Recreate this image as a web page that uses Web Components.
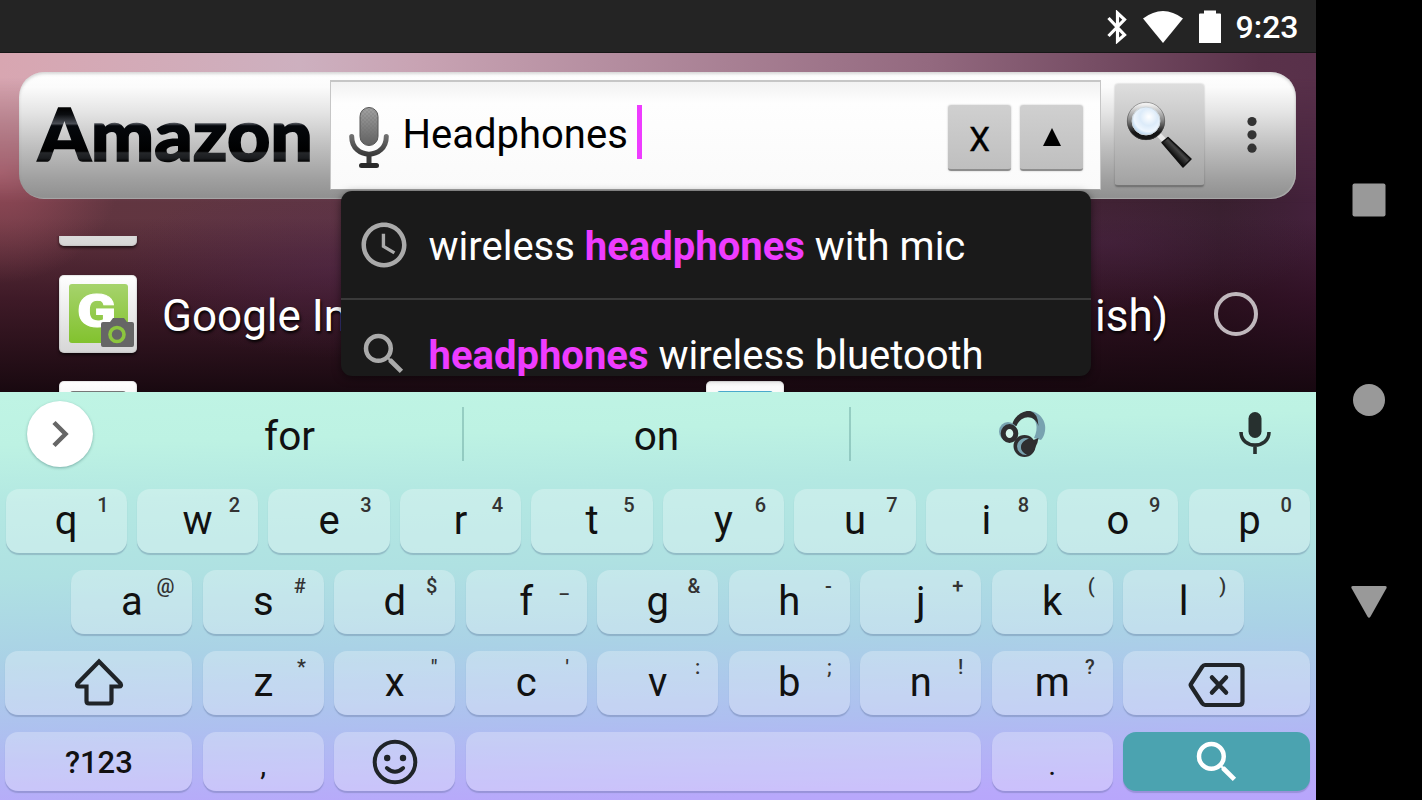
<!DOCTYPE html>
<html lang="en">
<head>
<meta charset="utf-8">
<title>Search</title>
<style>
    body{
        margin: 0;
        width: 1422px;
        height: 800px;
        overflow: hidden;
        background: #000;
        font-family: Roboto, "Noto Sans", sans-serif;
    }
</style>
</head>
<body>
<phone-shell>
    <status-bar slot="screen" time="9:23"></status-bar>
    <search-app slot="screen">
        <search-bar slot="bar" brand="Amazon" query="Headphones">
            <suggest-item icon="clock">wireless <b>headphones</b> with mic</suggest-item>
            <suggest-item icon="search"><b>headphones</b> wireless bluetooth</suggest-item>
        </search-bar>
        <engine-list slot="list"></engine-list>
    </search-app>
    <soft-keyboard slot="screen"></soft-keyboard>
    <nav-buttons slot="nav"></nav-buttons>
</phone-shell>

<script>
const ICONS = {
    clock: `<svg viewBox="0 0 24 24" fill="#aaa"><path d="M11.99 2C6.47 2 2 6.48 2 12s4.47 10 9.99 10C17.52 22 22 17.52 22 12S17.52 2 11.99 2zM12 20c-4.42 0-8-3.58-8-8s3.58-8 8-8 8 3.58 8 8-3.58 8-8 8zm.5-13H11v6l5.25 3.15.75-1.23-4.5-2.67z"/></svg>`,
    search: `<svg viewBox="0 0 24 24" fill="currentColor"><path d="M15.5 14h-.79l-.28-.27A6.471 6.471 0 0 0 16 9.5 6.5 6.5 0 1 0 9.5 16c1.61 0 3.09-.59 4.23-1.57l.27.28v.79l5 4.99L20.49 19l-4.99-5zm-6 0C7.01 14 5 11.99 5 9.5S7.01 5 9.5 5 14 7.01 14 9.5 11.99 14 9.5 14z"/></svg>`,
    shift: `<svg width="54" height="54" viewBox="0 0 54 54" fill="none" stroke="#202428" stroke-width="4.200"><path d="M27 5.500 L48.500 27.500 Q50 30.500 47 30.500 H39.500 V45 Q39.500 47.500 37 47.500 H17 Q14.500 47.500 14.500 45 V30.500 H7 Q4 30.500 5.500 27.500 Z"/></svg>`,
    backspace: `<svg width="58" height="48" viewBox="0 0 58 48" fill="none" stroke="#202428" stroke-width="4.200" style="margin-top:4px"><path d="M17 4 H51 Q54.500 4 54.500 7.500 V40.500 Q54.500 44 51 44 H17 Q15.500 44 14 42 L3 25 Q2.300 24 3 23 L14 6 Q15.500 4 17 4 Z"/><path stroke-linecap="round" stroke-width="4.500" d="M24 16.500 L38 31.500 M38 16.500 L24 31.500"/></svg>`,
    smile: `<svg width="46" height="46" viewBox="0 0 46 46"><circle cx="23" cy="23" r="20.300" fill="none" stroke="#202428" stroke-width="4"/><circle cx="15.200" cy="19" r="3.200" fill="#202428"/><circle cx="31" cy="19" r="3.200" fill="#202428"/><path d="M14.800 29 Q23 36.500 31.200 29" fill="none" stroke="#202428" stroke-width="3.800" stroke-linecap="round"/></svg>`
}

class PhoneShell extends HTMLElement{
    constructor(){
        super()
        this.attachShadow({mode:"open"})
        this.shadowRoot.innerHTML = `
        <style>
            :host{ display: flex; width: 1422px; height: 800px; background: #000; }
            main{ display: flex; flex-direction: column; width: 1315.5px; }
            aside{ flex: 1; }
        </style>
        <main><slot name="screen"></slot></main>
        <aside><slot name="nav"></slot></aside>
        `
    }
}
customElements.define('phone-shell', PhoneShell)

class StatusBar extends HTMLElement{
    constructor(){
        super()
        this.attachShadow({mode:"open"})
        this.shadowRoot.innerHTML = `
        <style>
            :host{
                display: flex;
                align-items: center;
                justify-content: flex-end;
                box-sizing: border-box;
                height: 53px;
                padding: 1px 17px 0 0;
                background: #242424;
                border-bottom: 1px solid #171717;
                color: #fff;
            }
            svg{ display: block; }
            .wifi{ margin: 0 16px; }
            span{ font-size: 32px; font-weight: 500; line-height: 50px; margin: 1px 0 0 15px; }
        </style>
        <svg width="20" height="34" viewBox="0 0 20 34" fill="none" stroke="#fff" stroke-width="3.200"><path d="M1.500 8 L17.500 25 L10.500 31 V3 L17.500 9.500 L1.500 26"/></svg>
        <svg class="wifi" width="40" height="34" viewBox="0 0 40 34"><path fill="#fff" d="M0 8.500 Q20 -6.500 40 8.500 L20 33 Z"/></svg>
        <svg width="22" height="34" viewBox="0 0 22 34"><path fill="#fff" d="M5 0.500 H17 V3.500 H21 Q22 3.500 22 4.500 V33 H0 V4.500 Q0 3.500 1 3.500 H5 Z"/></svg>
        <span></span>
        `
    }
    connectedCallback(){
        this.shadowRoot.querySelector('span').textContent = this.getAttribute('time')
    }
}
customElements.define('status-bar', StatusBar)

class SearchApp extends HTMLElement{
    constructor(){
        super()
        this.attachShadow({mode:"open"})
        this.shadowRoot.innerHTML = `
        <style>
            :host{
                display: flex;
                flex-direction: column;
                box-sizing: border-box;
                position: relative;
                height: 339px;
                padding-top: 19px;
                background:
                    radial-gradient(ellipse 120px 110px at 0 120px, rgba(170,84,100,.7), transparent),
                    radial-gradient(ellipse 230px 90px at 340px 215px, rgba(84,40,86,.35), transparent),
                    radial-gradient(ellipse 200px 70px at 1110px 190px, rgba(84,40,86,.35), transparent),
                    linear-gradient(to bottom, rgba(24,8,16,0) 165px, rgba(34,4,20,.55) 245px, rgba(20,6,13,.94) 339px),
                    linear-gradient(to right, #62353f 0, #5e3644 520px, #40222f 1060px, #371f2c 1220px, #44213c 1316px);
            }
            /* bright haze behind the bar */
            .haze{
                position: absolute;
                inset: 0 0 auto 0;
                height: 150px;
                background: linear-gradient(to right, #d8a6b1 0, #cdb0bf 300px, #c8a3b3 420px, #93697f 930px, #5a324a 1260px, #58304a 1316px);
                -webkit-mask-image: linear-gradient(to bottom, #000 25px, transparent 150px);
                mask-image: linear-gradient(to bottom, #000 25px, transparent 150px);
            }
        </style>
        <div class="haze"></div>
        <slot name="bar"></slot>
        <slot name="list"></slot>
        `
    }
}
customElements.define('search-app', SearchApp)

class SearchBar extends HTMLElement{
    constructor(){
        super()
        this.attachShadow({mode:"open"})
        this.shadowRoot.innerHTML = `
        <style>
            :host{
                display: flex;
                align-items: flex-start;
                box-sizing: border-box;
                position: relative;
                z-index: 2;
                width: 1277px;
                height: 127px;
                margin-left: 19px;
                padding-top: 8px;
                border-radius: 25px;
                background: linear-gradient(to bottom, #fff 0, #fbfbfb 12%, #e4e4e4 32%, #c0c0c0 58%, #a0a0a0 84%, #8f8f8f 100%);
                box-shadow: inset 0 2px 3px rgba(120,120,120,.3), inset -1px -1px 1px rgba(210,210,210,.4);
            }
            svg{ display: block; }
            .brand{ width: 311px; height: 110px; }
            .brand text{ font-family: Lato, sans-serif; font-weight: 900; font-size: 72px; }
            .field{
                position: relative;
                display: flex;
                align-items: center;
                box-sizing: border-box;
                width: 771px;
                height: 110px;
                padding: 0 17px;
                background: linear-gradient(to bottom, #f2f2f2, #fefefe 20%, #fafafa);
                border: 2px solid #c6c6c6;
                border-width: 2px 1px 1px;
                border-bottom-color: #a5a5a5;
            }
            .query{ font-size: 40px; color: #000; margin: -2px 0 0 12.5px; line-height: 54px; }
            .caret{ width: 4.500px; height: 54px; margin: -7px 0 0 9.5px; background: #ee3cff; }
            .spacer{ flex: 1; }
            .btn{
                display: flex;
                align-items: center;
                justify-content: center;
                box-sizing: border-box;
                width: 63px;
                height: 66px;
                margin: 5px 0 0 9px;
                border-radius: 3px;
                color: #000;
                background: linear-gradient(to bottom, #d0d0d0, #bfbfbf);
                border-bottom: 2px solid #8d8d8d;
                box-shadow: 0 0 2px rgba(0,0,0,.25);
            }
            .x span{ font-size: 33px; line-height: 60px; margin-top: 6px; -webkit-text-stroke: .4px #000; }
            .go{
                box-sizing: border-box;
                width: 89px;
                height: 103px;
                margin: 4px 0 0 14px;
                border-radius: 3px;
                background: linear-gradient(to bottom, #dedede, #c0c0c0 50%, #a2a2a2);
                border-bottom: 2px solid #757575;
                box-shadow: 0 0 2px rgba(0,0,0,.3);
            }
            .dots{ margin: 36px 0 0 43px; }
            .menu{
                position: absolute;
                left: 321.5px;
                top: 119px;
                width: 750px;
                height: 185px;
                overflow: hidden;
                border-radius: 11px;
                background: #1a1a1a;
                box-shadow: 0 2px 9px rgba(0,0,0,.5);
            }
        </style>
        <svg class="brand" viewBox="0 0 311 110">
            <defs>
                <linearGradient id="gloss" gradientUnits="userSpaceOnUse" x1="0" y1="28" x2="0" y2="82">
                    <stop offset="0" stop-color="#000"/>
                    <stop offset=".12" stop-color="#0b0d10"/>
                    <stop offset=".29" stop-color="#4a4e55"/>
                    <stop offset=".33" stop-color="#05080c"/>
                    <stop offset=".8" stop-color="#000"/>
                    <stop offset=".83" stop-color="#25272a"/>
                    <stop offset=".93" stop-color="#1b1d20"/>
                    <stop offset="1" stop-color="#000"/>
                </linearGradient>
            </defs>
            <text x="19" y="80.500" textLength="275" lengthAdjust="spacingAndGlyphs" fill="url(#gloss)" stroke="url(#gloss)" stroke-width="1.600"></text>
        </svg>
        <div class="field">
            <svg width="42" height="64" viewBox="0 0 42 64" style="margin-top:2px">
                <defs>
                    <linearGradient id="mic" x1="0" y1="0" x2="0" y2="1">
                        <stop offset="0" stop-color="#a3a3a3"/><stop offset="1" stop-color="#5f5f5f"/>
                    </linearGradient>
                    <linearGradient id="stand" gradientUnits="userSpaceOnUse" x1="0" y1="28" x2="0" y2="63">
                        <stop offset="0" stop-color="#777"/><stop offset=".6" stop-color="#3c3c3c"/><stop offset="1" stop-color="#222"/>
                    </linearGradient>
                    <pattern id="mesh" width="4" height="4" patternUnits="userSpaceOnUse">
                        <circle cx="1" cy="1" r=".8" fill="#666" fill-opacity=".45"/><circle cx="3" cy="3" r=".8" fill="#666" fill-opacity=".45"/>
                    </pattern>
                </defs>
                <rect x="12" y="2.500" width="18" height="38" rx="9" fill="url(#mic)" stroke="#555" stroke-width="1"/>
                <rect x="12" y="2.500" width="18" height="38" rx="9" fill="url(#mesh)"/>
                <g fill="none" stroke="url(#stand)" stroke-width="5" stroke-linecap="round">
                    <path d="M3.700 31.500 C3.700 55 38.300 55 38.300 31.500"/>
                    <path d="M21 50 V59.500" stroke="#3a3a3a" stroke-linecap="butt"/>
                    <path d="M13.500 60.500 H28.500" stroke="#2a2a2a"/>
                </g>
            </svg>
            <span class="query"></span>
            <span class="caret"></span>
            <span class="spacer"></span>
            <div class="btn x"><span>X</span></div>
            <div class="btn"><svg width="18" height="18" viewBox="0 0 18 18"><path d="M9 0 L18 18 H0 Z"/></svg></div>
        </div>
        <div class="go">
            <svg width="89" height="101" viewBox="0 0 89 101">
                <defs>
                    <linearGradient id="ring" x1="0" y1="0" x2="0" y2="1">
                        <stop offset="0" stop-color="#f0f0f0"/><stop offset=".45" stop-color="#8c8c8c"/><stop offset=".85" stop-color="#151515"/>
                    </linearGradient>
                    <radialGradient id="lens" cx=".6" cy=".35" r=".7">
                        <stop offset="0" stop-color="#fff"/><stop offset=".45" stop-color="#dcebf9"/><stop offset=".75" stop-color="#eef6fe"/><stop offset="1" stop-color="#a8cdec"/>
                    </radialGradient>
                    <linearGradient id="grip" x1="0" y1="1" x2="1" y2="0">
                        <stop offset=".35" stop-color="#000"/><stop offset=".55" stop-color="#444"/><stop offset=".65" stop-color="#111"/>
                    </linearGradient>
                </defs>
                <path d="M42 49 L51 58" stroke="#e8e8e8" stroke-width="5"/>
                <path d="M47 58.500 L53 53.500 L76 75 L68 83 Z" fill="url(#grip)" stroke="#111" stroke-width="1.500" stroke-linejoin="round"/>
                <circle cx="31" cy="37" r="16.500" fill="none" stroke="url(#ring)" stroke-width="5"/>
                <circle cx="31" cy="37" r="18.700" fill="none" stroke="#444" stroke-opacity=".6" stroke-width=".8"/>
                <circle cx="31" cy="37" r="14" fill="url(#lens)" stroke="#cfd8de" stroke-width="1"/>
            </svg>
        </div>
        <svg class="dots" width="10" height="38" viewBox="0 0 10 38" fill="#333"><circle cx="5" cy="5.500" r="4.600"/><circle cx="5" cy="18.800" r="4.600"/><circle cx="5" cy="32.200" r="4.600"/></svg>
        <div class="menu"><slot></slot></div>
        `
    }
    connectedCallback(){
        this.shadowRoot.querySelector('.brand text').textContent = this.getAttribute('brand')
        this.shadowRoot.querySelector('.query').textContent = this.getAttribute('query')
    }
}
customElements.define('search-bar', SearchBar)

class SuggestItem extends HTMLElement{
    constructor(){
        super()
        this.attachShadow({mode:"open"})
        this.shadowRoot.innerHTML = `
        <style>
            :host{
                display: flex;
                align-items: center;
                height: 107px;
                padding-left: 16.5px;
                gap: 17.5px;
                border-bottom: 2px solid #3a3a3a;
                color: #aaa;
            }
            .icon{ width: 54px; height: 54px; }
            .text{ font-size: 40px; color: #fff; white-space: pre; margin-top: 3px; }
            ::slotted(b){ color: #ee3cff; font-weight: 700; }
        </style>
        <div class="icon">${ICONS[this.getAttribute('icon')]}</div>
        <div class="text"><slot></slot></div>
        `
    }
}
customElements.define('suggest-item', SuggestItem)

class EngineList extends HTMLElement{
    constructor(){
        super()
        this.attachShadow({mode:"open"})
        this.shadowRoot.innerHTML = `
        <style>
            :host{
                display: flex;
                flex-direction: column;
                position: relative;
                height: 156px;
                margin-top: 37px;
                overflow: hidden;
            }
            .row{ display: flex; height: 78px; padding: 0 57.5px 0 59px; flex: none; }
            .above{ height: 10px; align-items: flex-end; margin-bottom: 29px; }
            .below{ margin-top: 28px; gap: 569px; }
            .tile{
                flex: none;
                width: 78px;
                height: 78px;
                border-radius: 5px;
                background: linear-gradient(to bottom, #fff, #d6d6d6);
                box-shadow: 0 2px 3px rgba(0,0,0,.6), inset 0 0 1px 1px rgba(150,150,150,.25);
            }
            .middle{ align-items: center; color: #fff; font-size: 44px; text-shadow: 1px 2px 3px #000; }
            .name{ margin: 4px 0 0 25px; }
            .rest{ margin: 4px 46px 0 auto; }
            .radio{ width: 36px; height: 36px; border: 4.5px solid #c0b8bd; border-radius: 50%; }
            .peek{ height: 6px; margin: 10px 11px 0; border-radius: 3px 3px 0 0; background: #777; }
            .blue{ background: #4aa9cc; }
            svg{ display: block; }
            svg text{ font: 900 47px Roboto, sans-serif; text-shadow: none; }
        </style>
        <div class="row above"><div class="tile"></div></div>
        <div class="row middle">
            <div class="tile">
                <svg width="78" height="78" viewBox="0 0 78 78">
                    <defs><linearGradient id="green" x1="0" y1="0" x2="0" y2="1"><stop offset="0" stop-color="#a6d36c"/><stop offset="1" stop-color="#82c22e"/></linearGradient></defs>
                    <rect x="10" y="9" width="59" height="59" rx="3" fill="url(#green)"/>
                    <text x="18" y="52" textLength="39" lengthAdjust="spacingAndGlyphs" fill="#fff" stroke="#fff" stroke-width="1">G</text>
                    <path fill="#666" d="M44 47 H51 L54 43 H65 L68 47 H73 Q75 47 75 49 V70 Q75 72 73 72 H44 Q42 72 42 70 V49 Q42 47 44 47 Z"/>
                    <circle cx="58" cy="59.500" r="7" fill="none" stroke="#8cc63e" stroke-width="3.600"/>
                </svg>
            </div>
            <span class="name">Google Im</span>
            <span class="rest">ish)</span>
            <span class="radio"></span>
        </div>
        <div class="row below">
            <div class="tile"><div class="peek"></div></div>
            <div class="tile"><div class="peek blue"></div></div>
        </div>
        `
    }
}
customElements.define('engine-list', EngineList)

class KbKey extends HTMLElement{
    constructor(){
        super()
        this.attachShadow({mode:"open"})
        this.shadowRoot.innerHTML = `
        <style>
            :host{
                display: flex;
                align-items: center;
                justify-content: center;
                position: relative;
                box-sizing: border-box;
                width: 121.1px;
                border-radius: 13px;
                background: rgba(255,255,255,.28);
                box-shadow: 0 2px 1px rgba(60,80,120,.26);
                font-size: 40px;
                color: #111;
            }
            :host([wide]){ width: 186.9px; }
            :host([space]){ width: 515.6px; }
            :host([small]){ font-size: 31px; font-weight: 500; padding-top: 2px; }
            :host([punct]){ font-size: 30px; padding-top: 6px; }
            :host([icon]){ color: #fff; }
            :host([enter]){ background: #4ba3b0; }
            .hint{
                position: absolute;
                top: 4px;
                right: 18px;
                font-size: 20px;
                font-weight: 500;
                color: #333;
            }
            ::slotted(svg){ display: block; }
        </style>
        <slot></slot>
        <span class="hint"></span>
        `
    }
    connectedCallback(){
        const hint = this.shadowRoot.querySelector('.hint')
        if(this.hasAttribute('hint')) hint.textContent = this.getAttribute('hint')
        else hint.remove()
    }
}
customElements.define('kb-key', KbKey)

const letters = (keys, hints) => [...keys].map((k, i) => {
    const hint = hints[i].replace('&', '&amp;').replace('"', '&quot;')
    return `<kb-key hint="${hint}">${k}</kb-key>`
}).join('')

class SoftKeyboard extends HTMLElement{
    constructor(){
        super()
        this.attachShadow({mode:"open"})
        this.shadowRoot.innerHTML = `
        <style>
            :host{
                display: block;
                height: 408px;
                background: linear-gradient(178.5deg, #bff4e4 0, #bdf2e3 12%, #b3e8e2 25%, #afe1e2 42%, #aad2e6 60%, #aebff0 78%, #b8a8fb 96%, #b8a5fc 100%);
            }
            .strip{ display: flex; align-items: center; height: 84px; color: #111; font-size: 40.5px; }
            .side{ display: flex; justify-content: center; flex: 1; }
            .first{ flex: none; width: 90px; padding-left: 27px; justify-content: flex-start; }
            .chip{
                width: 66px;
                height: 66px;
                border-radius: 50%;
                background: #fff;
                box-shadow: 0 1px 3px rgba(0,60,60,.35);
            }
            .word{
                display: flex;
                flex: none;
                align-items: center;
                justify-content: center;
                box-sizing: border-box;
                width: 345px;
                height: 54px;
            }
            .mid{ width: 387px; }
            .word + .word{ border-left: 2px solid rgba(90,150,145,.4); }
            .word span{ margin-top: 4px; }
            .keys{ display: flex; flex-direction: column; gap: 17.5px; padding-top: 13px; }
            .row{ display: flex; gap: 10.4px; justify-content: center; height: 63.5px; }
            .last{ height: 59px; }
            svg{ display: block; }
        </style>
        <div class="strip">
            <div class="side first"><div class="chip"><svg width="66" height="66" viewBox="0 0 66 66"><path d="M27 21.500 L38.500 33 L27 44.500" fill="none" stroke="#666" stroke-width="4.500"/></svg></div></div>
            <div class="word"><span>for</span></div>
            <div class="word mid"><span>on</span></div>
            <div class="word">
                <svg width="48" height="48" viewBox="0 0 48 48">
                    <path d="M28 1 C40 0 48 11 46 21 Q45 27 42 30 L35 28 C40 18 38 8 28 4 Z" fill="#78a2b0"/>
                    <path d="M13 15 C15 6 24 0 31 1 Q39 3 39.500 16 C36 5 23 4 17.500 16 Z" fill="#2f2e30"/>
                    <ellipse cx="9" cy="21.500" rx="9" ry="9.500" fill="#78a2b0"/>
                    <ellipse cx="10.500" cy="23.500" rx="6.300" ry="7" fill="#d5f5ec" stroke="#2f2e30" stroke-width="5"/>
                    <circle cx="25.500" cy="36" r="11" fill="#2f2e30"/>
                    <path d="M32 31 L39.500 28 Q39 33 36 38 Z" fill="#2f2e30"/>
                    <path d="M30 28.500 A9 8.500 0 1 0 28 45 Q20 40 23 34 Q25 30 30 28.500Z" fill="#78a2b0"/>
                    <circle cx="29" cy="37" r="7" fill="#2f2e30"/>
                </svg>
            </div>
            <div class="side">
                <svg width="32" height="44" viewBox="0 0 32 44" style="margin-top:-2px"><rect x="9.500" y="1" width="13" height="26" rx="6.500" fill="#27302f"/><path d="M2 21 C2 38.500 30 38.500 30 21 M16 34 V43" fill="none" stroke="#27302f" stroke-width="3.600"/></svg>
            </div>
        </div>
        <div class="keys">
            <div class="row">${letters('qwertyuiop', '1234567890')}</div>
            <div class="row">${letters('asdfghjkl', '@#$_&-+()')}</div>
            <div class="row">
                <kb-key wide icon>${ICONS.shift}</kb-key>
                ${letters('zxcvbnm', '*"\':;!?')}
                <kb-key wide icon>${ICONS.backspace}</kb-key>
            </div>
            <div class="row last">
                <kb-key wide small>?123</kb-key>
                <kb-key punct>,</kb-key>
                <kb-key icon>${ICONS.smile}</kb-key>
                <kb-key space></kb-key>
                <kb-key punct>.</kb-key>
                <kb-key wide icon enter><span style="width:54px;height:54px">${ICONS.search}</span></kb-key>
            </div>
        </div>
        `
    }
}
customElements.define('soft-keyboard', SoftKeyboard)

class NavButtons extends HTMLElement{
    constructor(){
        super()
        this.attachShadow({mode:"open"})
        this.shadowRoot.innerHTML = `
        <style>
            :host{
                display: flex;
                flex-direction: column;
                align-items: center;
                justify-content: space-between;
                box-sizing: border-box;
                height: 800px;
                padding: 183px 0 181px;
                background: #000;
            }
            svg{ display: block; fill: #999; }
        </style>
        <svg width="34" height="34"><rect x=".5" y=".5" width="33" height="33" rx="2"/></svg>
        <svg width="34" height="34"><circle cx="17" cy="16" r="16"/></svg>
        <svg width="36" height="34"><path d="M2 1 H34 Q36.500 1 35.300 3.500 L19.500 31.500 Q18 34 16.500 31.500 L.700 3.500 Q-.500 1 2 1Z"/></svg>
        `
    }
}
customElements.define('nav-buttons', NavButtons)
</script>
</body>
</html>
